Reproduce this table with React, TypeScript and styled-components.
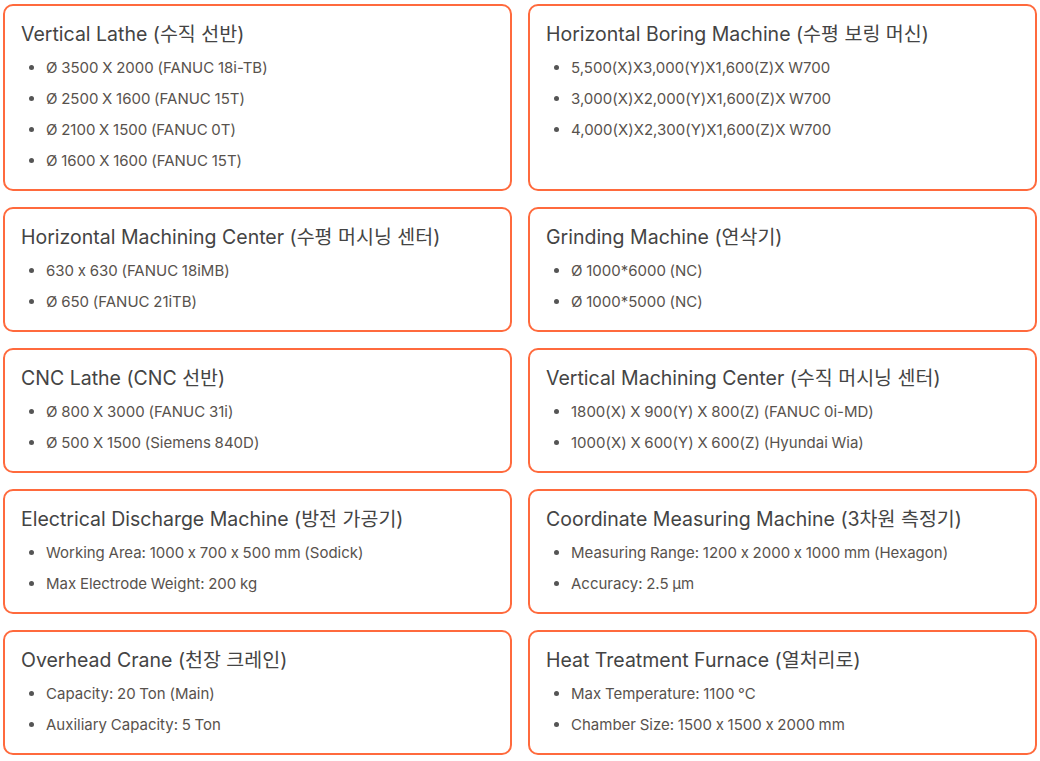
import React from "react";
import styled, { createGlobalStyle } from "styled-components";

const Global = createGlobalStyle`
  html, body { margin: 0; padding: 0; background: #ffffff; }
  body { font-family: Inter, "Noto Sans CJK KR", sans-serif; font-feature-settings: "calt" 0; }
  * { box-sizing: border-box; }
`;

const Grid = styled.div`
  display: grid;
  grid-template-columns: 1fr 1fr;
  column-gap: 16px;
  row-gap: 16px;
  padding: 4px 3px;
`;

const Card = styled.section`
  border: 2px solid #ff6a3d;
  border-radius: 10px;
  padding: 16px;
  background: #fff;
`;

const Title = styled.h3`
  margin: 0;
  font-size: 19.5px;
  line-height: 25px;
  font-weight: 400;
  color: #444444;
`;

const List = styled.ul`
  margin: 9px 0 0 0;
  padding: 0 0 0 25px;
  display: flex;
  flex-direction: column;
  gap: 7px;
`;

const Item = styled.li`
  font-size: 15px;
  line-height: 24px;
  color: #58524d;
  word-spacing: -0.5px;
  &::marker { color: #555; }
`;

const data: { title: string; items: string[] }[] = [
  {
    title: "Vertical Lathe (수직 선반)",
    items: [
      "Ø 3500 X 2000 (FANUC 18i-TB)",
      "Ø 2500 X 1600 (FANUC 15T)",
      "Ø 2100 X 1500 (FANUC 0T)",
      "Ø 1600 X 1600 (FANUC 15T)",
    ],
  },
  {
    title: "Horizontal Boring Machine (수평 보링 머신)",
    items: [
      "5,500(X)X3,000(Y)X1,600(Z)X W700",
      "3,000(X)X2,000(Y)X1,600(Z)X W700",
      "4,000(X)X2,300(Y)X1,600(Z)X W700",
    ],
  },
  {
    title: "Horizontal Machining Center (수평 머시닝 센터)",
    items: ["630 x 630 (FANUC 18iMB)", "Ø 650 (FANUC 21iTB)"],
  },
  {
    title: "Grinding Machine (연삭기)",
    items: ["Ø 1000*6000 (NC)", "Ø 1000*5000 (NC)"],
  },
  {
    title: "CNC Lathe (CNC 선반)",
    items: ["Ø 800 X 3000 (FANUC 31i)", "Ø 500 X 1500 (Siemens 840D)"],
  },
  {
    title: "Vertical Machining Center (수직 머시닝 센터)",
    items: [
      "1800(X) X 900(Y) X 800(Z)  (FANUC 0i-MD)",
      "1000(X) X 600(Y) X 600(Z)  (Hyundai Wia)",
    ],
  },
  {
    title: "Electrical Discharge Machine (방전 가공기)",
    items: [
      "Working Area: 1000 x 700 x 500 mm (Sodick)",
      "Max Electrode Weight: 200 kg",
    ],
  },
  {
    title: "Coordinate Measuring Machine (3차원 측정기)",
    items: [
      "Measuring Range: 1200 x 2000 x 1000 mm (Hexagon)",
      "Accuracy: 2.5 µm",
    ],
  },
  {
    title: "Overhead Crane (천장 크레인)",
    items: ["Capacity: 20 Ton (Main)", "Auxiliary Capacity: 5 Ton"],
  },
  {
    title: "Heat Treatment Furnace (열처리로)",
    items: ["Max Temperature: 1100 °C", "Chamber Size: 1500 x 1500 x 2000 mm"],
  },
];

export default function App() {
  return (
    <>
      <Global />
      <Grid>
        {data.map((c) => (
          <Card key={c.title}>
            <Title>{c.title}</Title>
            <List>
              {c.items.map((it) => (
                <Item key={it}>{it}</Item>
              ))}
            </List>
          </Card>
        ))}
      </Grid>
    </>
  );
}
